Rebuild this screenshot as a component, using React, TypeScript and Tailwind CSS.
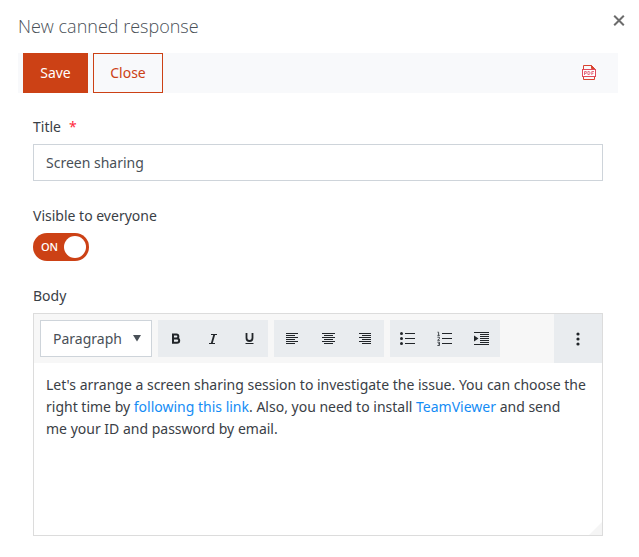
import React, { useState } from "react";

type IconProps = { children: React.ReactNode };

function Icon({ children }: IconProps) {
  return (
    <svg width="16" height="16" viewBox="0 0 16 16" fill="#212529" shapeRendering="crispEdges" aria-hidden="true">
      {children}
    </svg>
  );
}

function Lines({ rows }: { rows: [number, number][] }) {
  return (
    <Icon>
      {rows.map(([x, w], i) => (
        <rect key={i} x={x} y={2 + i * 2} width={w} height="1" />
      ))}
    </Icon>
  );
}

function BulletIcon() {
  return (
    <Icon>
      {[2, 7, 12].map((y) => (
        <g key={y}>
          <rect x="5" y={y} width="10" height="1" />
          <circle cx="1.5" cy={y + 0.5} r="1.5" shapeRendering="auto" />
        </g>
      ))}
    </Icon>
  );
}

function NumberIcon() {
  return (
    <Icon>
      {[2, 7, 12].map((y) => (
        <rect key={y} x="5" y={y} width="10" height="1" />
      ))}
      <g fill="none" stroke="#343a40" strokeWidth="0.9" shapeRendering="auto">
        <path d="M0.5 1.2H1.6V4.4M0.4 4.4H2.8" />
        <path d="M0.4 6.2H2.4V7.5L0.6 9.3H2.9" />
        <path d="M0.4 11.2H2.5V14.5H0.4M1 12.8H2.5" />
      </g>
    </Icon>
  );
}

function IndentIcon() {
  return (
    <Icon>
      <rect x="0" y="1" width="15" height="1" />
      {[3, 5, 7, 9, 11].map((y) => (
        <rect key={y} x="6" y={y} width="9" height="1" />
      ))}
      <rect x="0" y="13" width="15" height="1" />
      <path d="M0 4.5V10.5L4.5 7.5Z" shapeRendering="auto" />
    </Icon>
  );
}

function BoldIcon() {
  return (
    <svg width="16" height="16" viewBox="0 0 16 16" fill="none" stroke="#212529" strokeWidth="2" aria-hidden="true">
      <path d="M5 3.5H8.4A1.9 1.9 0 0 1 8.4 7.4H5M5 7.4H9A2.2 2.2 0 0 1 9 11.8H5M5 2.6V12.7" />
    </svg>
  );
}

function ItalicIcon() {
  return (
    <svg width="16" height="16" viewBox="0 0 16 16" fill="none" stroke="#212529" aria-hidden="true">
      <path d="M6 3.5H12M4 12.5H10" />
      <path d="M9.3 3.5L6.7 12.5" strokeWidth="1.8" />
    </svg>
  );
}

function UnderlineIcon() {
  return (
    <svg width="16" height="16" viewBox="0 0 16 16" fill="none" stroke="#212529" aria-hidden="true">
      <path d="M4.5 2V7A3 3 0 0 0 10.5 7V2" strokeWidth="1.8" />
      <path d="M3.5 12.5H11.5" />
    </svg>
  );
}

const groups = [
  [
    { name: "Bold", icon: <BoldIcon /> },
    { name: "Italic", icon: <ItalicIcon /> },
    { name: "Underline", icon: <UnderlineIcon /> },
  ],
  [
    { name: "Align left", icon: <Lines rows={[[2, 12], [2, 9], [2, 12], [2, 9], [2, 12], [2, 9]]} /> },
    { name: "Align center", icon: <Lines rows={[[1, 13], [3, 9], [1, 13], [3, 9], [1, 13], [3, 9]]} /> },
    { name: "Align right", icon: <Lines rows={[[1, 12], [4, 9], [1, 12], [4, 9], [1, 12], [4, 9]]} /> },
  ],
  [
    { name: "Bulleted list", icon: <BulletIcon /> },
    { name: "Numbered list", icon: <NumberIcon /> },
    { name: "Indent", icon: <IndentIcon /> },
  ],
];

function Editor() {
  return (
    <div className="border border-[#dcdcdc]">
      <div className="flex h-[49px] items-stretch bg-[#f7f7f7]">
        <div className="flex flex-1 gap-1.5 py-1.5 pl-1.5">
          <div className="relative w-28">
            <select
              aria-label="Block format"
              className="h-[37px] w-full appearance-none border border-[#ced4da] bg-white pl-3 text-[#495057]"
            >
              <option>Paragraph</option>
              <option>Heading 1</option>
              <option>Heading 2</option>
            </select>
            <svg className="pointer-events-none absolute top-[15px] right-[11px]" width="8" height="7" viewBox="0 0 8 7" fill="#495057" aria-hidden="true">
              <path d="M0 0H8L4 6.5Z" />
            </svg>
          </div>
          {groups.map((group) => (
            <div key={group[0].name} className="flex h-[37px] w-[110px] bg-[#e9ecef]">
              {group.map((item) => (
                <button key={item.name} type="button" aria-label={item.name} className="flex flex-1 items-center justify-center">
                  {item.icon}
                </button>
              ))}
            </div>
          ))}
        </div>
        <button type="button" aria-label="More" className="flex w-12 items-center justify-center bg-[#e9ecef]">
          <svg width="4" height="14" viewBox="0 0 4 14" fill="#212529" aria-hidden="true">
            <circle cx="2" cy="2" r="1.6" />
            <circle cx="2" cy="7" r="1.6" />
            <circle cx="2" cy="12" r="1.6" />
          </svg>
        </button>
      </div>
      <div className="flex items-end">
        <div
          role="textbox"
          aria-labelledby="body-label"
          aria-multiline="true"
          className="min-h-[172px] flex-1 py-[11px] pl-3 leading-[22px] text-[#3a4046]"
        >
          Let's arrange a screen sharing session to investigate the issue. You can choose the right time by{" "}
          <a href="#link" className="text-[#148cf5]">following this link</a>. Also, you need to install{" "}
          <a href="#teamviewer" className="text-[#148cf5]">TeamViewer</a> and send me{"\u00a0"}your ID and password by email.
        </div>
        <svg width="13" height="13" viewBox="0 0 13 13" fill="#f5f5f5" aria-hidden="true">
          <path d="M13 0V13H0Z" />
        </svg>
      </div>
    </div>
  );
}

export default function App() {
  const [visible, setVisible] = useState(true);
  const [title, setTitle] = useState("Screen sharing");

  return (
    <form className="bg-white pr-[21px] pb-5 pl-[18px] font-['Noto_Sans','Open_Sans',sans-serif] text-sm text-[#3a4046]">
      <header className="flex h-[53px] items-start justify-between">
        <h1 className="pt-3 font-['Open_Sans','Noto_Sans',sans-serif] text-lg leading-7 font-light text-[#495057]">New canned response</h1>
        <button type="button" aria-label="Close dialog" className="-mr-[7px] pt-[15px]">
          <svg width="12" height="11" viewBox="0 0 12 11" stroke="#6c6c6c" strokeWidth="2" aria-hidden="true">
            <path d="M1.2 0.7L10.8 10.3M10.8 0.7L1.2 10.3" />
          </svg>
        </button>
      </header>

      <div className="flex h-10 items-center gap-[5px] bg-[#f8f9fb] pr-[22px] pl-[5px]">
        <button type="button" className="h-10 w-[65px] bg-[#cc4115] text-white">Save</button>
        <button type="button" className="h-10 w-[70px] border border-[#cc4115] text-[#cc4115]">Close</button>
        <button type="button" aria-label="Export to PDF" className="ml-auto">
          <svg width="14" height="16" viewBox="0 0 14 16" fill="none" stroke="#d9442f" aria-hidden="true">
            <path d="M1.5 5V0.5H9.5L12.5 3.5V5M1.5 11V14.5H12.5V11" />
            <path d="M9.5 0.5V3.5H12.5Z" fill="#d9442f" />
            <rect x="0.5" y="4.5" width="13" height="7" fill="#fff" stroke="#e04a5a" />
            <path d="M2.5 10V6.5H4.3V8.4H2.5M5.9 6.5V9.5H7L8 8.8V7.2L7 6.5ZM9.8 10V6.5H12M9.8 8.3H11.5" stroke="#e0506a" strokeWidth="0.8" />
          </svg>
        </button>
      </div>

      <div className="px-[15px]">
        <label htmlFor="title" className="mt-6 block leading-5">
          Title<span className="ml-2 text-[#ff2a3c]">*</span>
        </label>
        <input
          id="title"
          value={title}
          onChange={(e) => setTitle(e.target.value)}
          className="mt-[7px] block h-[37px] w-full border border-[#ced4da] px-3 text-[#495057] outline-none"
        />

        <label htmlFor="visible" className="mt-[25px] block leading-5">Visible to everyone</label>
        <label
          className={`mt-[7px] flex h-7 w-14 cursor-pointer items-center rounded-full px-[3px] text-[11px] font-medium text-white ${
            visible ? "bg-[#cc4115]" : "flex-row-reverse bg-gray-400"
          }`}
        >
          <input
            id="visible"
            type="checkbox"
            checked={visible}
            onChange={(e) => setVisible(e.target.checked)}
            className="sr-only"
          />
          <span className="flex-1 pl-[5px]">{visible ? "ON" : "OFF"}</span>
          <span className="size-[22px] rounded-full bg-white" />
        </label>

        <div id="body-label" className="mt-[25px] mb-[7px] leading-5">Body</div>
        <Editor />
      </div>
    </form>
  );
}
